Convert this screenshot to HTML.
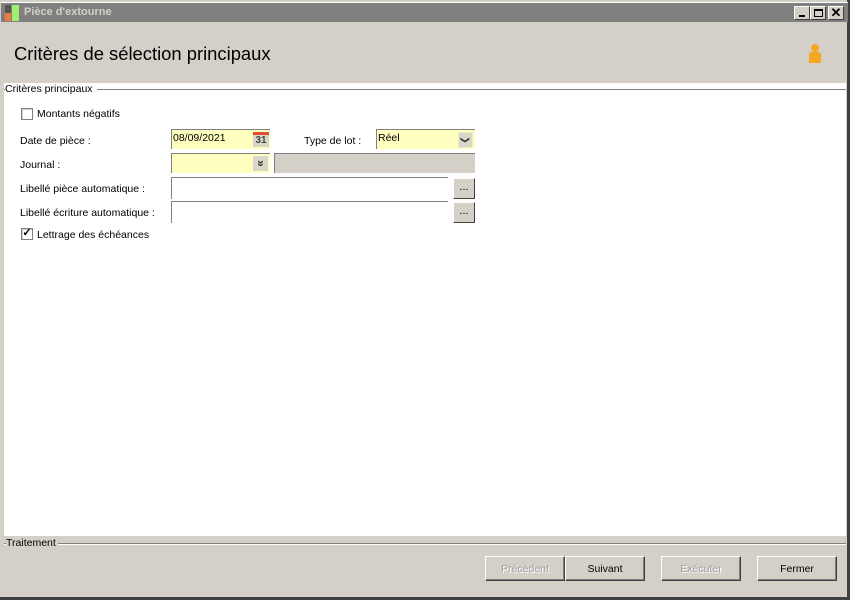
<!DOCTYPE html>
<html><head><meta charset="utf-8"><style>
*{margin:0;padding:0;box-sizing:border-box}
body{width:850px;height:600px;background:#d4d0c8;font-family:"Liberation Sans",sans-serif;font-size:10.5px;color:#000;position:relative;overflow:hidden}
.a{position:absolute}
.tb{left:1px;top:2px;width:847px;height:20px;background:#808080;border-top:1px solid #fff}
.tbt{left:24px;top:6px;color:#d4d0c8;font-weight:bold;font-size:11px}
.wb{width:16px;height:14px;background:#d4d0c8;border:1px solid;border-color:#fff #404040 #404040 #fff;top:6px}
.white{left:4px;top:83px;width:842px;height:453px;background:#fff}
.inp{border-top:1px solid #808080;border-left:1px solid #808080;height:20px}
.btn{height:25px;top:556px;border:1px solid;border-color:#fff #404040 #404040 #fff;box-shadow:inset -1px -1px 0 #808080;text-align:center;line-height:24px;font-size:10.5px}
.dis{color:#a0a0a0;text-shadow:1px 1px 0 #fff}
.cb{width:12px;height:12px;border:1px solid #808080;background:#fff;box-shadow:inset 1px 1px 0 #d4d0c8}
.dot{width:22px;height:21px;background:#d4d0c8;border:1px solid;border-color:#fff #404040 #404040 #fff;text-align:center;line-height:17px;font-size:11px}
</style></head><body>
<div class="a" style="left:0;top:0;width:850px;height:600px;border:1px solid;border-color:#d4d0c8 #404040 #404040 #d4d0c8"></div>
<div class="a" style="left:847px;top:0;width:3px;height:600px;background:#404040"></div>
<div class="a" style="left:0;top:597px;width:850px;height:3px;background:#404040"></div>
<div class="a tb"></div>
<div class="a" style="left:5px;top:5px;width:6px;height:16px;background:#555"></div>
<div class="a" style="left:5px;top:13px;width:6px;height:8px;background:#f07a3c"></div>
<div class="a" style="left:12px;top:5px;width:7px;height:16px;background:#9ef070"></div>
<div class="a tbt">Pièce d'extourne</div>
<div class="a wb" style="left:794px"><div class="a" style="left:4px;top:8px;width:6px;height:2px;background:#000"></div></div>
<div class="a wb" style="left:810px"><div class="a" style="left:3px;top:2px;width:9px;height:8px;border:1px solid #000;border-top-width:2px"></div></div>
<div class="a wb" style="left:828px;text-align:center;line-height:11px;font-size:13px;font-weight:bold">✕</div>
<div class="a" style="left:14px;top:43px;font-size:18.4px">Critères de sélection principaux</div>
<svg class="a" style="left:806px;top:43px" width="18" height="22"><circle cx="9" cy="5" r="4" fill="#f5a623"/><path d="M3 20 L3 12 Q3 9 6 9 L12 9 Q15 9 15 12 L15 20 Z" fill="#f5a623"/></svg>
<div class="a white"></div>
<div class="a" style="left:4px;top:89px;width:842px;height:1px;background:#808080"></div>
<div class="a" style="left:4px;top:90px;width:842px;height:1px;background:#fff"></div>
<div class="a" style="left:5px;top:83px;background:#fff;padding-right:4px">Critères principaux</div>
<div class="a cb" style="left:21px;top:108px"></div>
<div class="a" style="left:37px;top:108px">Montants négatifs</div>
<div class="a" style="left:20px;top:135px">Date de pièce :</div>
<div class="a inp" style="left:171px;top:129px;width:99px;background:#ffffc0"><span class="a" style="left:1px;top:2px">08/09/2021</span>
<div class="a" style="left:81px;top:2px;width:16px;height:15px;background:#d8d8c8;border-top:3px solid #e05030;font-size:10px;font-weight:bold;text-align:center;line-height:12px;color:#444">31</div></div>
<div class="a" style="left:304px;top:135px">Type de lot :</div>
<div class="a inp" style="left:376px;top:129px;width:99px;background:#ffffc0"><span class="a" style="left:1px;top:2px">Réel</span>
<div class="a" style="left:81px;top:3px;width:15px;height:14px;background:#d8d8c8;font-size:9px;text-align:center;line-height:14px;color:#333;transform:rotate(90deg)">❯</div></div>
<div class="a" style="left:20px;top:159px">Journal :</div>
<div class="a inp" style="left:171px;top:153px;width:99px;background:#ffffc0">
<div class="a" style="left:81px;top:2px;width:15px;height:15px;background:#d8d8c8;font-size:12px;text-align:center;line-height:14px;color:#333;font-weight:bold;transform:rotate(90deg)">»</div></div>
<div class="a inp" style="left:274px;top:153px;width:201px;background:#d4d0c8"></div>
<div class="a" style="left:20px;top:183px">Libellé pièce automatique :</div>
<div class="a inp" style="left:171px;top:177px;width:277px;height:22px;background:#fff"></div>
<div class="a dot" style="left:453px;top:178px">...</div>
<div class="a" style="left:20px;top:207px">Libellé écriture automatique :</div>
<div class="a inp" style="left:171px;top:201px;width:277px;height:22px;background:#fff"></div>
<div class="a dot" style="left:453px;top:202px">...</div>
<div class="a cb" style="left:21px;top:228px;font-size:11px;line-height:9px;text-align:center;font-weight:bold">✓</div>
<div class="a" style="left:37px;top:229px">Lettrage des échéances</div>
<div class="a" style="left:4px;top:543px;width:842px;height:1px;background:#808080"></div>
<div class="a" style="left:4px;top:544px;width:842px;height:1px;background:#fff"></div>
<div class="a" style="left:6px;top:537px;background:#d4d0c8;padding-right:2px">Traitement</div>
<div class="a btn dis" style="left:485px;width:80px">Précédent</div>
<div class="a btn" style="left:565px;width:80px">Suivant</div>
<div class="a btn dis" style="left:661px;width:80px">Exécuter</div>
<div class="a btn" style="left:757px;width:80px">Fermer</div>
</body></html>
